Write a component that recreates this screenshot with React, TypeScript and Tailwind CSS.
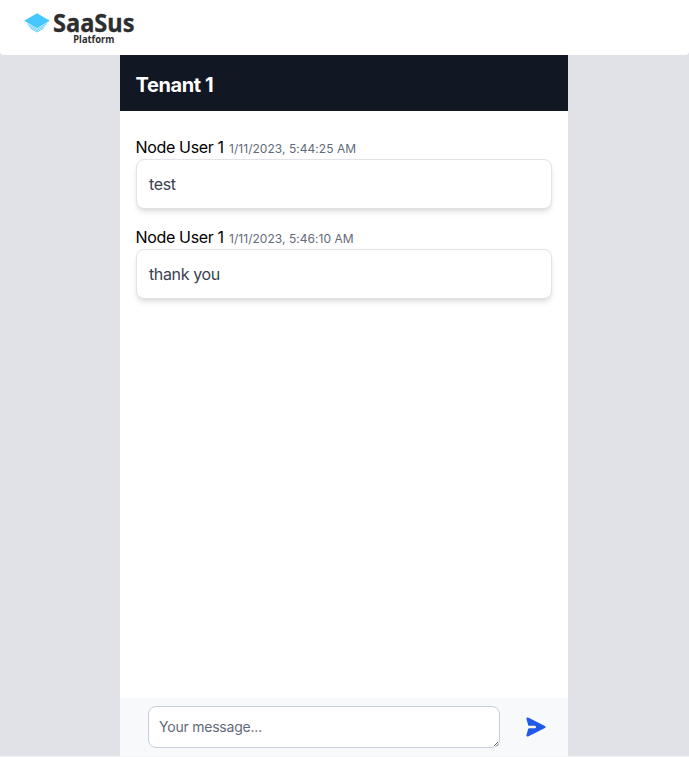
const messages = [
  { user: "Node User 1", date: "1/11/2023, 5:44:25 AM", text: "test" },
  { user: "Node User 1", date: "1/11/2023, 5:46:10 AM", text: "thank you" },
];

function Logo() {
  return (
    <svg width="120" height="45" viewBox="0 -8 120 45" role="img" aria-label="SaaSus Platform">
      <path d="M13 3.300 25.800 10.800 13 18.200.200 10.800Z" fill="#44c8ff" />
      <path
        d="M3 13.500 13 19.300l10-5.800M4.600 15.700 13 20.700l8.400-5M6.200 18l6.800 4 6.800-4"
        fill="none"
        stroke="#5accfd"
        strokeWidth="0.9"
      />
      <g fill="#2d2e30" stroke="#2d2e30" fontFamily="'Noto Sans', sans-serif" fontWeight="700">
        <text x="29" y="21.800" fontSize="25" strokeWidth="0.3" textLength="81.500" lengthAdjust="spacingAndGlyphs">
          SaaSus
        </text>
        <text x="49.300" y="32.800" fontSize="10" strokeWidth="0" textLength="41" lengthAdjust="spacingAndGlyphs">
          Platform
        </text>
      </g>
    </svg>
  );
}

export default function App() {
  return (
    <div className="flex h-[757px] flex-col bg-[#f3f4f6] font-['Inter',sans-serif]">
      <div className="flex h-[756px] flex-col bg-[#e1e2e8]">
        <header className="h-[55px] shrink-0 rounded-b-sm bg-white pl-6 pt-0.5">
          <Logo />
        </header>
        <main className="ml-[120px] flex min-h-0 w-[448px] flex-1 flex-col bg-white">
          <div className="flex h-14 shrink-0 items-center bg-[#111723] pl-[15.500px] pt-1">
            <h1 className="text-xl font-bold tracking-[-0.400px] text-white">Tenant 1</h1>
          </div>
          <div className="flex flex-1 flex-col gap-4 px-4 pt-6">
            {messages.map((m) => (
              <div key={m.date}>
                <div className="flex h-6 items-baseline gap-1 leading-6">
                  <span className="-ml-[0.500px] w-[89.500px] whitespace-nowrap text-base tracking-[-0.340px] text-black">{m.user}</span>
                  <span className="text-xs tracking-[0.040px] text-[#626a7a]">{m.date}</span>
                </div>
                <div className="h-[50px] rounded-lg border border-[#e1e3e9] bg-white px-3 py-3 text-base leading-6 tracking-[-0.360px] text-[#374151] shadow-md">
                  {m.text}
                </div>
              </div>
            ))}
          </div>
          <form className="flex h-[58px] shrink-0 items-center bg-[#f8f9fb] pl-7 pr-5">
            <div className="relative">
              <textarea
                placeholder="Your message..."
                className="block h-[42px] w-[352px] resize-none rounded-lg border border-[#c8cfd8] bg-white p-2.5 text-sm leading-5 tracking-[-0.220px] text-gray-900 placeholder:text-[#626a7a]"
              />
              <svg className="pointer-events-none absolute bottom-px right-px size-1.5" viewBox="0 0 6 6" stroke="#444" strokeWidth="0.8">
                <path d="M1 5 5 1M3.500 5.200 5.200 3.500" />
              </svg>
            </div>
            <button type="button" aria-label="Send message" className="ml-6 text-[#2058e8]">
              <svg className="size-6 rotate-90" viewBox="0 0 20 20" fill="currentColor">
                <path d="M10.894 2.553a1 1 0 00-1.788 0l-7 14a1 1 0 001.169 1.409l5-1.429A1 1 0 009 15.571V11a1 1 0 112 0v4.571a1 1 0 00.725.962l5 1.428a1 1 0 001.170-1.408l-7-14z" />
              </svg>
            </button>
          </form>
        </main>
      </div>
    </div>
  );
}
